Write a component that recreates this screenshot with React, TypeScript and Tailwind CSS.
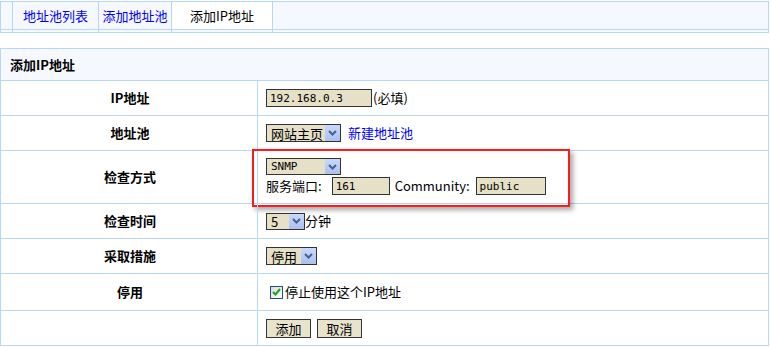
import React from "react";

const font = { fontFamily: '"Noto Sans CJK SC", "Liberation Sans", sans-serif' };
const mono = { fontFamily: '"DejaVu Sans Mono", monospace' };

function Chevron() {
  return (
    <span className="flex h-full w-[16px] items-center justify-center border-l border-[#e6e1c6] bg-gradient-to-b from-[#c9d9fb] to-[#a9c0f2]">
      <svg width="9" height="6" viewBox="0 0 9 6">
        <path d="M1 1 L4.5 4.5 L8 1" fill="none" stroke="#4a5f8a" strokeWidth="2" />
      </svg>
    </span>
  );
}

function FakeSelect({ value, w, h = "h-[18px]", isMono = false }: { value: string; w: string; h?: string; isMono?: boolean }) {
  return (
    <div className={`flex ${w} ${h} items-stretch border border-[#333] bg-[#e6e1c6]`}>
      <span
        className={`flex flex-1 items-center pl-[4px] ${isMono ? "text-[11px]" : "text-[13px]"} leading-none text-black`}
        style={isMono ? mono : undefined}
      >
        {value}
      </span>
      <Chevron />
    </div>
  );
}

function TextBox({ value, w }: { value: string; w: string }) {
  return (
    <div
      className={`flex ${w} h-[18px] items-center border border-[#333] bg-[#e6e1c6] pl-[3px] text-[11px] leading-none text-black`}
      style={mono}
    >
      {value}
    </div>
  );
}

function Btn({ label }: { label: string }) {
  return (
    <div className="flex h-[19px] w-[45px] items-center justify-center border border-[#333] bg-[#e8e4cb] text-[13px] leading-none text-black">
      {label}
    </div>
  );
}

function Row({ label, h, children, extra }: { label: string; h: string; children?: React.ReactNode; extra?: React.ReactNode }) {
  return (
    <div className={`relative flex ${h} border-b border-[#b6d7f7]`}>
      <div className="flex w-[257px] items-center justify-center border-r border-[#b6d7f7] pl-[2px] text-[13px] font-bold text-black">
        {label}
      </div>
      <div className="flex flex-1 items-center pl-[8px] text-[13px] text-black">{children}</div>
      {extra}
    </div>
  );
}

export default function App() {
  return (
    <div className="h-[347px] w-[771px] overflow-hidden bg-white" style={font}>
      {/* tabs */}
      <div className="mt-[1px] flex h-[32px] w-[769px] border border-[#b6d7f7] bg-[#f5f9ff] text-[13px]">
        <div className="w-[12px] border-r border-[#b6d7f7]">
          <div className="h-[28px] border-b border-[#b6d7f7]" />
        </div>
        <div className="w-[86px] border-r border-[#b6d7f7]">
          <div className="flex h-[28px] items-center justify-center border-b border-[#b6d7f7] text-[#0000ff]">地址池列表</div>
        </div>
        <div className="w-[73px] border-r border-[#b6d7f7]">
          <div className="flex h-[28px] items-center justify-center border-b border-[#b6d7f7] text-[#0000ff]">添加地址池</div>
        </div>
        <div className="w-[101px] border-r border-[#b6d7f7]">
          <div className="flex h-[28px] items-center justify-center border-b border-[#b6d7f7] bg-white text-black">添加IP地址</div>
        </div>
        <div className="flex-1">
          <div className="h-[28px] border-b border-[#b6d7f7]" />
        </div>
      </div>

      {/* form */}
      <div className="mt-[15px] w-[769px] border-x border-t border-[#b6d7f7]">
        <div className="flex h-[32px] items-center border-b border-[#b6d7f7] bg-[#f5f9ff] pl-[9px] text-[13px] font-bold text-black">
          添加IP地址
        </div>
        <Row label="IP地址" h="h-[35px]">
          <TextBox value="192.168.0.3" w="w-[106px]" />
          <span className="ml-[1px]">(必填)</span>
        </Row>
        <Row label="地址池" h="h-[35px]">
          <FakeSelect value="网站主页" w="w-[75px]" />
          <span className="ml-[7px] text-[#0000ff]">新建地址池</span>
        </Row>
        <Row
          label="检查方式"
          h="h-[53px]"
          extra={
            <div className="pointer-events-none absolute left-[251px] top-[-2px] h-[58px] w-[318px] border-2 border-[#ff1a1a] shadow-[3px_3px_5px_rgba(0,0,0,0.35)]" />
          }
        >
          <div className="flex flex-col">
            <FakeSelect value="SNMP" w="w-[75px]" h="h-[17px]" isMono />
            <div className="mt-[1px] flex items-center">
              <span>服务端口:</span>
              <span className="ml-[10px]">
                <TextBox value="161" w="w-[58px]" />
              </span>
              <span className="ml-[5px]">Community:</span>
              <span className="ml-[6px]">
                <TextBox value="public" w="w-[70px]" />
              </span>
            </div>
          </div>
        </Row>
        <Row label="检查时间" h="h-[35px]">
          <FakeSelect value="5" w="w-[39px]" h="h-[17px]" />
          <span>分钟</span>
        </Row>
        <Row label="采取措施" h="h-[35px]">
          <FakeSelect value="停用" w="w-[51px]" h="h-[18px]" />
        </Row>
        <Row label="停用" h="h-[37px]">
          <span className="ml-[4px] flex h-[13px] w-[13px] items-center justify-center border border-[#1c5180] bg-gradient-to-br from-[#dcdcd6] to-white">
            <svg width="9" height="8" viewBox="0 0 9 8">
              <path d="M1 4 L3.5 6.5 L8 1" fill="none" stroke="#21a121" strokeWidth="2" />
            </svg>
          </span>
          <span className="ml-[2px]">停止使用这个IP地址</span>
        </Row>
        <Row label="" h="h-[35px]">
          <div className="flex gap-[6px]">
            <Btn label="添加" />
            <Btn label="取消" />
          </div>
        </Row>
      </div>
    </div>
  );
}
